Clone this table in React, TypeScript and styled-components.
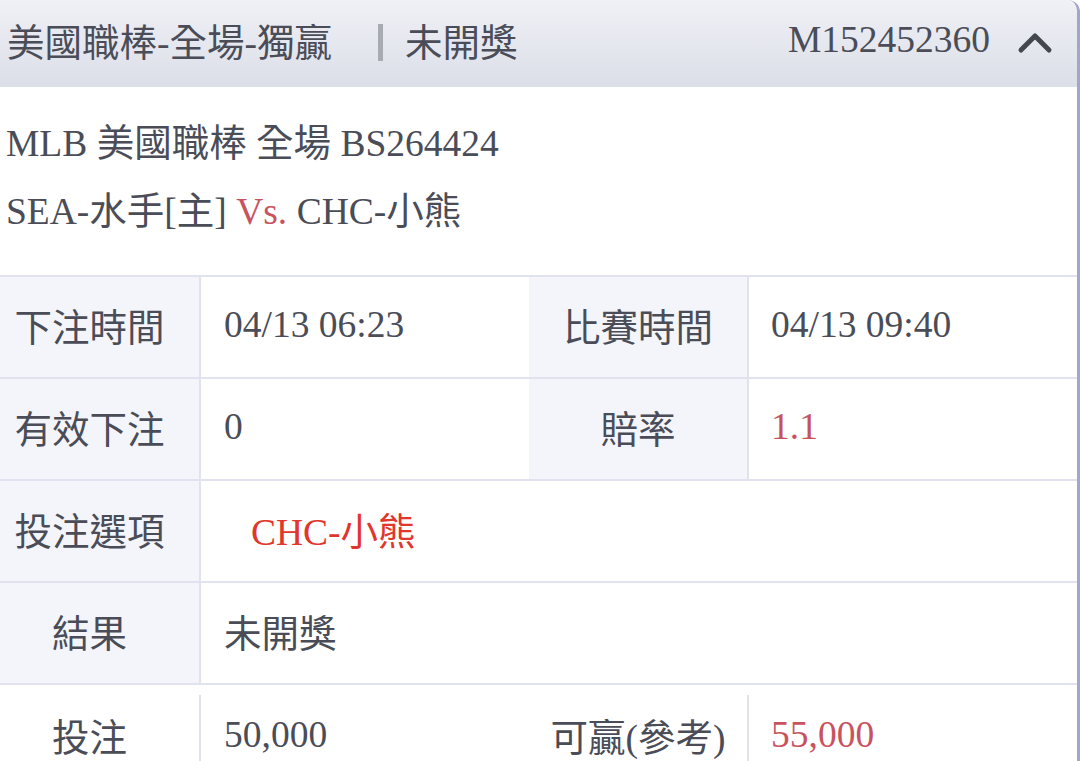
import styled, { createGlobalStyle } from "styled-components";

const GlobalStyle = createGlobalStyle`
  body {
    margin: 0;
    background: #ffffff;
    font-family: "Liberation Serif", "Noto Sans CJK TC", serif;
  }
`;

const StyledCard = styled.div`
  width: 1080px;
  box-sizing: border-box;
  border-right: 3px solid #a3a4cf;
  border-top-right-radius: 12px;
  overflow: hidden;
  background: #ffffff;
  color: #4a4d57;
  font-size: 37.5px;
`;

const StyledHeader = styled.div`
  display: flex;
  align-items: center;
  height: 87px;
  box-sizing: border-box;
  padding: 0 24px 8px 7px;
  background: linear-gradient(180deg, #f0f1f6 0%, #dcdee8 100%);
`;

const StyledHeaderDivider = styled.span`
  width: 5px;
  height: 37px;
  margin: 6px 22px 0 46px;
  background: #a9abb3;
`;

const StyledOrderNo = styled.span`
  margin-left: auto;
  margin-right: 27px;
`;

const StyledChevron = styled.svg`
  margin-top: 6px;
`;

const StyledInfo = styled.div`
  padding: 23px 0 29px 6px;
  line-height: 68px;
`;

const StyledRed = styled.span<{ $bright?: boolean }>`
  color: ${({ $bright }) => ($bright ? "#e2352b" : "#c8535e")};
`;

const StyledRow = styled.div<{ $open?: boolean }>`
  display: grid;
  grid-template-columns: 199px 330px 218px 1fr;
  border-top: 2px solid #e1e2ef;
  padding-top: ${({ $open }) => ($open ? "10px" : "0")};
`;

const StyledLabel = styled.div<{ $first?: boolean; $plain?: boolean; $h?: number }>`
  display: flex;
  align-items: center;
  justify-content: center;
  height: ${({ $h }) => $h ?? 100}px;
  padding-right: ${({ $first }) => ($first ? "20px" : "0")};
  padding-bottom: 5px;
  background: ${({ $plain }) => ($plain ? "#ffffff" : "#f4f5fa")};
  box-sizing: border-box;
`;

const StyledValue = styled.div<{ $wide?: boolean; $indent?: number; $h?: number }>`
  display: flex;
  align-items: center;
  height: ${({ $h }) => $h ?? 100}px;
  padding-left: ${({ $indent }) => $indent ?? 23}px;
  padding-bottom: 5px;
  border-left: 2px solid #e1e2ef;
  grid-column: ${({ $wide }) => ($wide ? "2 / 5" : "auto")};
  box-sizing: border-box;
`;

const ChevronUp = () => (
  <StyledChevron width="36" height="24" viewBox="0 0 36 24">
    <polyline
      points="4,19 18,5 32,19"
      fill="none"
      stroke="#45474f"
      strokeWidth="5"
      strokeLinecap="round"
      strokeLinejoin="round"
    />
  </StyledChevron>
);

export default function App() {
  return (
    <>
      <GlobalStyle />
      <StyledCard>
        <StyledHeader>
          <span>美國職棒-全場-獨贏</span>
          <StyledHeaderDivider />
          <span>未開獎</span>
          <StyledOrderNo>M152452360</StyledOrderNo>
          <ChevronUp />
        </StyledHeader>

        <StyledInfo>
          <div>MLB 美國職棒 全場 BS264424</div>
          <div>
            SEA-水手[主] <StyledRed>Vs.</StyledRed> CHC-小熊
          </div>
        </StyledInfo>

        <StyledRow>
          <StyledLabel $first>下注時間</StyledLabel>
          <StyledValue>04/13 06:23</StyledValue>
          <StyledLabel>比賽時間</StyledLabel>
          <StyledValue $indent={22}>04/13 09:40</StyledValue>
        </StyledRow>

        <StyledRow>
          <StyledLabel $first>有效下注</StyledLabel>
          <StyledValue>0</StyledValue>
          <StyledLabel>賠率</StyledLabel>
          <StyledValue $indent={22}>
            <StyledRed>1.1</StyledRed>
          </StyledValue>
        </StyledRow>

        <StyledRow>
          <StyledLabel $first>投注選項</StyledLabel>
          <StyledValue $wide $indent={50}>
            <StyledRed $bright>CHC-小熊</StyledRed>
          </StyledValue>
        </StyledRow>

        <StyledRow>
          <StyledLabel $first>結果</StyledLabel>
          <StyledValue $wide>未開獎</StyledValue>
        </StyledRow>

        <StyledRow $open>
          <StyledLabel $first $plain $h={84}>投注</StyledLabel>
          <StyledValue $h={84}>50,000</StyledValue>
          <StyledLabel $plain $h={84}>可贏(參考)</StyledLabel>
          <StyledValue $indent={22} $h={84}>
            <StyledRed>55,000</StyledRed>
          </StyledValue>
        </StyledRow>
      </StyledCard>
    </>
  );
}
